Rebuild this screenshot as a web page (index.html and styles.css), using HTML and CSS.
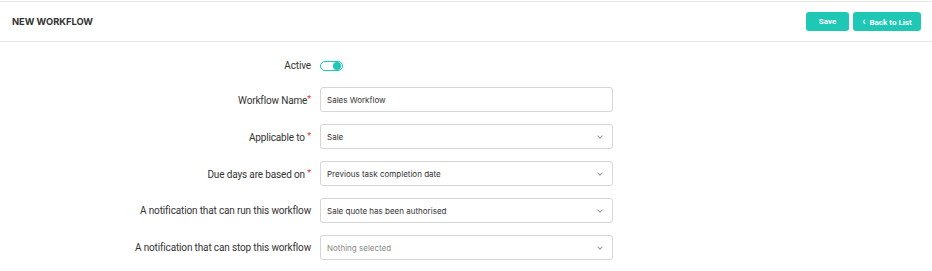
FILE: index.html
```html
<!DOCTYPE html>
<html lang="en">
<head>
    <meta charset="UTF-8">
    <meta name="viewport" content="width=device-width, initial-scale=1.0">
    <title>New Workflow</title>
    <link rel="stylesheet" href="styles.css">
</head>
<body>
    <div class="page-header">
        <h1>NEW WORKFLOW</h1>
        <div class="header-actions">
            <button type="button" class="btn btn-save">Save</button>
            <button type="button" class="btn btn-back"><span class="btn-arrow">&lsaquo;</span> Back to List</button>
        </div>
    </div>

    <form class="workflow-form">
        <div class="form-row row-active">
            <label>Active</label>
            <span class="toggle"><span class="toggle-knob"></span></span>
        </div>
        <div class="form-row">
            <label>Workflow Name<span class="req">*</span></label>
            <div class="field">Sales Workflow</div>
        </div>
        <div class="form-row">
            <label>Applicable to <span class="req">*</span></label>
            <div class="field select">Sale</div>
        </div>
        <div class="form-row">
            <label>Due days are based on <span class="req">*</span></label>
            <div class="field select">Previous task completion date</div>
        </div>
        <div class="form-row">
            <label>A notification that can run this workflow</label>
            <div class="field select">Sale quote has been authorised</div>
        </div>
        <div class="form-row">
            <label>A notification that can stop this workflow</label>
            <div class="field select placeholder">Nothing selected</div>
        </div>
    </form>
</body>
</html>
```

FILE: styles.css
```css
body {
    font-family: Inter, "Noto Sans", Arial, sans-serif;
    background-color: #ffffff;
    color: #333;
    margin: 0;
    padding: 0;
}

.page-header {
    margin-top: 1px;
    height: 39px;
    border-top: 1px solid #e6e6e6;
    border-bottom: 1px solid #e6e6e6;
    display: flex;
    align-items: center;
    justify-content: space-between;
    padding: 0 11px 0 12px;
}

.page-header h1 {
    margin: 0;
    font-size: 9.3px;
    font-weight: 700;
    color: #333;
}

.header-actions {
    display: flex;
    gap: 4px;
}

.btn {
    height: 19px;
    padding: 0;
    background-color: #1ec8b5;
    color: #fff;
    border: none;
    border-radius: 3px;
    font-family: Roboto, Arial, sans-serif;
    font-size: 8px;
    font-weight: 700;
    cursor: pointer;
}

.btn-save {
    width: 43px;
}

.btn-back {
    width: 68px;
}

.btn-arrow {
    font-size: 10px;
    margin-right: 2px;
}

.workflow-form {
    padding-top: 11px;
    display: flex;
    flex-direction: column;
    gap: 12px;
}

.form-row {
    display: grid;
    grid-template-columns: 311px 293px;
    column-gap: 9px;
    align-items: center;
    height: 25px;
}

.row-active {
    margin-bottom: -3px;
}

.form-row label {
    text-align: right;
    font-family: Roboto, Arial, sans-serif;
    font-size: 10px;
    letter-spacing: -0.15px;
    color: #333;
    white-space: nowrap;
}

.req {
    color: #e53935;
    font-size: 9px;
    vertical-align: 2px;
}

.toggle {
    width: 21px;
    height: 8px;
    border: 1px solid #1ec8b5;
    border-radius: 6px;
    position: relative;
}

.toggle-knob {
    position: absolute;
    right: 1px;
    top: 0;
    width: 8px;
    height: 8px;
    border-radius: 50%;
    background-color: #1ec8b5;
}

.field {
    height: 23px;
    border: 1px solid #d6d6d6;
    border-radius: 3px;
    padding: 0 6px;
    display: flex;
    align-items: center;
    font-size: 8px;
    color: #333;
    position: relative;
}

.field.select::after {
    content: "";
    position: absolute;
    right: 10px;
    top: 9px;
    width: 3px;
    height: 3px;
    border-right: 1px solid #999;
    border-bottom: 1px solid #999;
    transform: rotate(45deg);
}

.field.placeholder {
    color: #888;
}
```
